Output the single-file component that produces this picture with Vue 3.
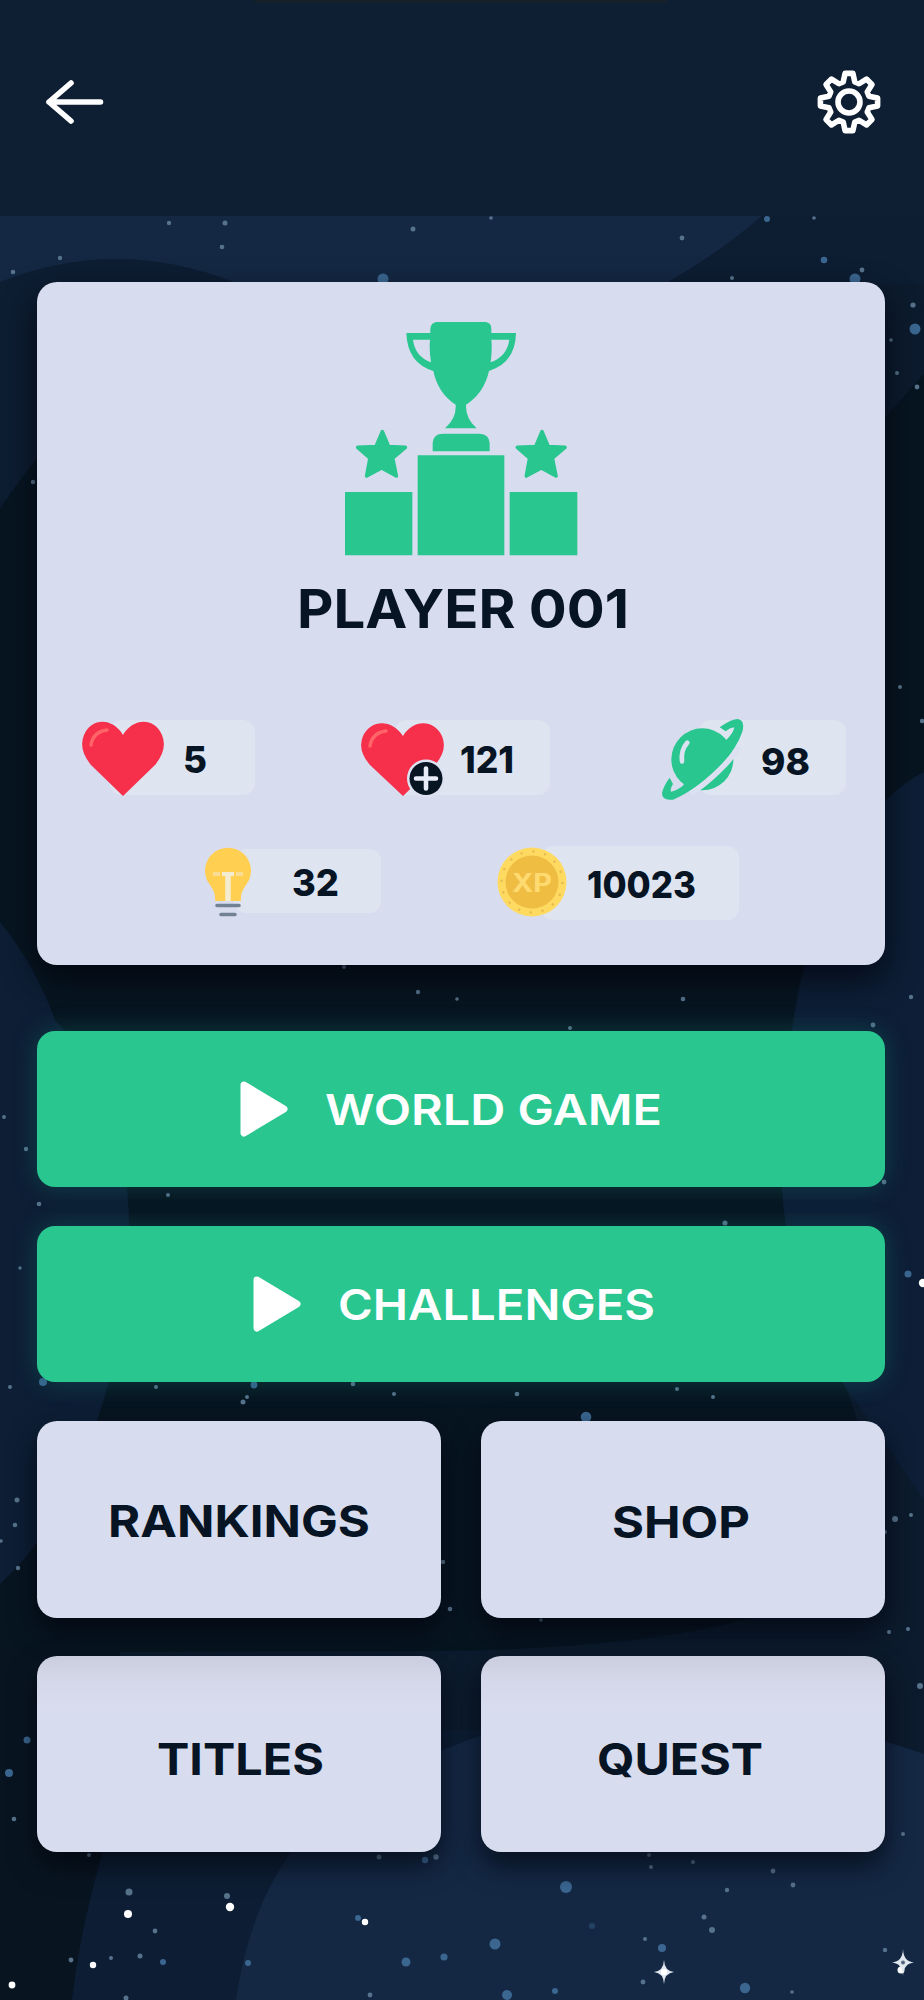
<script setup>
// [x, y, radius, tone]; tones: 0 faint, 1 blue, 2 white, 3 dim
const stars = [
  [169, 223, 2.2, 0], [225, 223, 2.5, 0], [222, 247, 2.3, 0], [413, 229, 2.5, 0], [491, 218, 1.8, 0],
  [682, 238, 2.4, 0], [767, 219, 3, 1], [814, 218, 1.8, 0], [824, 260, 3.3, 1], [862, 270, 2.4, 0],
  [855, 279, 5.5, 1], [383, 279, 5.5, 1], [732, 278, 2, 0], [60, 258, 2.2, 0], [13, 272, 2.3, 0],
  [913, 305, 2.6, 0], [915, 329, 5.5, 1], [891, 340, 1.8, 0], [897, 373, 2, 0], [917, 387, 2.4, 0],
  [33, 482, 2.2, 0], [900, 687, 2, 0], [922, 721, 2.2, 0], [344, 967, 2, 0], [418, 992, 2.2, 0],
  [457, 999, 1.8, 0], [683, 999, 2.3, 0], [911, 997, 2.2, 0], [570, 1028, 2, 0], [873, 1025, 2.4, 0],
  [4, 1117, 1.9, 0], [26, 1149, 2.2, 0], [168, 1195, 2, 0], [39, 1204, 2.3, 0], [884, 1182, 2.4, 0],
  [725, 1223, 2.6, 0], [20, 1268, 1.7, 0], [908, 1274, 3.5, 1], [923, 1283, 4.2, 2], [10, 1387, 2, 0],
  [43, 1382, 4, 1], [156, 1387, 2, 0], [254, 1385, 3.4, 1], [247, 1397, 2, 0], [243, 1402, 2.5, 0],
  [353, 1384, 2.3, 0], [394, 1394, 2, 0], [517, 1394, 2.3, 0], [677, 1389, 2, 0], [713, 1397, 2, 0],
  [586, 1417, 5.3, 1], [17, 1500, 2.5, 0], [15, 1525, 2.3, 0], [1, 1541, 1.8, 0], [18, 1568, 2.2, 0],
  [895, 1519, 3, 0], [911, 1515, 2, 0], [885, 1532, 2, 0], [443, 1562, 2.2, 0], [450, 1609, 2.3, 0],
  [541, 1620, 1.8, 0], [889, 1632, 2, 0], [908, 1629, 2, 0], [920, 1686, 3, 0], [27, 1740, 3.5, 1],
  [9, 1773, 4, 1], [14, 1819, 2.3, 0], [903, 1834, 2, 0], [89, 1855, 2, 0], [379, 1857, 2.5, 0],
  [436, 1857, 2.7, 0], [425, 1860, 3.2, 1], [649, 1855, 2, 0], [651, 1867, 2, 0], [693, 1862, 2, 0],
  [773, 1871, 2.4, 0], [793, 1885, 2.4, 0], [727, 1890, 2.2, 0], [566, 1887, 6, 1], [129, 1892, 3.5, 0],
  [128, 1914, 4, 2], [227, 1896, 3, 0], [230, 1907, 4.2, 2], [358, 1918, 3, 1], [365, 1922, 3.2, 2],
  [155, 1931, 2.4, 0], [592, 1926, 3, 3], [704, 1917, 2.5, 0], [712, 1930, 3, 0], [645, 1939, 2, 0],
  [495, 1944, 5.5, 1], [444, 1957, 3.6, 1], [406, 1962, 4.5, 1], [662, 1948, 4, 1], [140, 1956, 2.5, 0],
  [163, 1962, 3, 1], [71, 1960, 2.4, 0], [93, 1965, 3.2, 2], [111, 1958, 2, 0], [248, 1963, 3, 1],
  [12, 1985, 3.4, 2], [126, 1998, 2.5, 0], [370, 1995, 2.4, 0], [507, 1995, 5, 1], [555, 1991, 3, 1],
  [643, 1982, 2.4, 0], [745, 1988, 5.2, 1], [792, 1992, 1.8, 0], [885, 1950, 2.2, 0], [901, 1970, 3.5, 2],
]
const tone = ['#57738c', '#3a6690', '#ffffff', '#234264']

// Eight-tooth cog outline, one tooth repeated every 45 degrees
const tooth = [[-5.8, -20], [-3.9, -28.6], [3.9, -28.6], [5.8, -20]]
const cog = 'M' + Array.from({ length: 8 }, (_, i) => {
  const a = (i * Math.PI) / 4
  return tooth
    .map(([x, y]) => `${(x * Math.cos(a) - y * Math.sin(a)).toFixed(2)} ${(x * Math.sin(a) + y * Math.cos(a)).toFixed(2)}`)
    .join('L')
}).join('L') + 'Z'

const games = [
  { name: 'WORLD GAME', x: -1, width: 336, length: 337 },
  { name: 'CHALLENGES', x: -1, width: 317, length: 317 },
]
const tiles = [
  { name: 'RANKINGS', x: 1, y: 45, width: 262 },
  { name: 'SHOP', x: -2, y: 46, width: 138 },
  { name: 'TITLES', x: 2, y: 48, width: 167 },
  { name: 'QUEST', x: -3, y: 48, width: 166 },
]
</script>

<template>
  <main class="screen">
    <svg class="sky" width="924" height="2000" viewBox="0 0 924 2000" aria-hidden="true">
      <rect width="924" height="2000" fill="#0c1b2d" />
      <path d="M0 216H762Q724 250 665 284V420H0Z" fill="#142843" />
      <path d="M0 282Q115 236 234 282L924 284V216H762Q724 250 665 284H234V500H0Z" fill="#0d1d32" />
      <path d="M0 509Q20 478 60 430H875Q900 400 924 374V772Q850 820 810 940Q780 1050 782 1190Q790 1300 843 1383Q900 1500 790 1605Q680 1648 441 1651L0 1652Z" fill="#071521" />
      <path d="M0 922Q35 965 55 1020Q127 1100 127 1187Q138 1300 97 1421Q60 1530 0 1584Z" fill="#0d1e35" />
      <path d="M924 772Q850 810 812 940Q780 1050 782 1190Q790 1300 843 1383L924 1500Z" fill="#0d1e36" />
      <path d="M0 1645H120V1800Q84 1900 72 2000H0Z" fill="#081521" />
      <path d="M120 1800Q84 1900 72 2000H500L520 1730H140Z" fill="#0d1e34" />
      <path d="M236 2000Q265 1800 441 1751Q650 1660 924 1754V2000Z" fill="#142844" />
      <circle v-for="(s, i) in stars" :key="i" :cx="s[0]" :cy="s[1]" :r="s[2]" :fill="tone[s[3]]" />
      <g fill="#dfe7ef">
        <path d="M664 1960Q664.500 1971 674 1972Q664.500 1973 664 1984Q663.500 1973 654 1972Q663.500 1971 664 1960Z" />
        <circle cx="664" cy="1972" r="3.200" fill="#fff" />
        <path d="M903 1949Q903.500 1961.500 914 1962.500Q903.500 1963.500 903 1976Q902.500 1963.500 892 1962.500Q902.500 1961.500 903 1949Z" />
        <circle cx="903" cy="1962.500" r="2" fill="#52677c" />
      </g>
    </svg>

    <header class="bar">
      <span class="notch"></span>
      <svg width="62" height="50" viewBox="0 0 62 50" fill="none" stroke="#fff" stroke-width="5.600" stroke-linecap="round" stroke-linejoin="round">
        <path d="M56.500 25H5M27 6L5 25L27 44" />
      </svg>
      <svg width="70" height="70" viewBox="-35 -35 70 70" fill="none" stroke="#fff" stroke-width="5.600" stroke-linejoin="round">
        <path :d="cog" />
        <circle r="11" />
      </svg>
    </header>

    <section class="content">
      <article class="card">
        <svg class="trophy" width="233" height="234" viewBox="75 67 699 702" fill="#29c68f">
          <path d="M75 577H277V767H75ZM293 467H553V767H293ZM569 577H772V767H569Z" />
          <path d="M338 455V430Q340 402 369 402H479Q507 403 509 430V455Z" />
          <path d="M349 67H497Q514 69 514 87V100H588Q586 190 507 214Q492 281 438 315Q436 356 470 386H375Q410 356 407 315Q354 281 340 214Q262 190 259 100H331V87Q333 69 349 67ZM279 120Q285 170 333 188Q327 150 330 120ZM514 120Q517 150 512 188Q561 170 568 120Z" />
          <path v-for="x in [0, 479]" :key="x" :transform="`translate(${x} 0)`" stroke="#29c68f" stroke-width="11" stroke-linejoin="round" d="M187 396L206 441L256 443L218 475L229 529L185 505L140 529L150 475L113 443L168 441Z" />
        </svg>
        <svg class="player" width="332" height="54" viewBox="0 0 332 54">
          <text x="-1" y="46" textLength="332" lengthAdjust="spacingAndGlyphs">PLAYER 001</text>
        </svg>

        <div class="stats first">
          <div class="stat lives">
            <svg class="icon" width="82" height="76" viewBox="0 0 82 76">
              <path d="M41 75L9 44Q-4 28 2 14C10-4 31-3 41 14C51-3 72-4 80 14Q86 28 73 44Z" fill="#f62f4b" />
              <path d="M9 24Q11 11 25 9" fill="none" stroke="#ff6468" stroke-width="3.500" stroke-linecap="round" />
            </svg>
            <div class="pill"><svg width="24" height="30"><text x="-1" y="28" textLength="24" lengthAdjust="spacingAndGlyphs">5</text></svg></div>
          </div>
          <div class="stat extra">
            <svg class="icon" width="86" height="76" viewBox="0 0 86 76">
              <path d="M42 74L9 43Q-4 28 2 14C10-3 31-3 42 14C52-3 73-3 81 14Q87 28 74 43Z" fill="#f62f4b" />
              <path d="M9 24Q11 11 25 9" fill="none" stroke="#ff6468" stroke-width="3.500" stroke-linecap="round" />
              <circle cx="65" cy="56.500" r="19" fill="#dde2f0" /><circle cx="65" cy="56.500" r="16.500" fill="#071421" />
              <path d="M65 46.500V66.500M55 56.500H75" stroke="#e8ecf6" stroke-width="4.600" stroke-linecap="round" />
            </svg>
            <div class="pill"><svg width="54" height="30"><text x="-1" y="28" textLength="54" lengthAdjust="spacingAndGlyphs">121</text></svg></div>
          </div>
          <div class="stat worlds">
            <svg class="icon" width="82" height="82" viewBox="547 57 246 246">
              <circle cx="668" cy="178" r="93" fill="#29c68f" />
              <path d="M778 140Q758 172 717 212Q672 256 632 280" fill="none" stroke="#dbe1f0" stroke-width="18" />
              <path d="M720 82Q755 57 775 57Q797 62 788 95Q770 150 710 208Q640 275 580 299Q547 303 547 280Q550 260 570 233L580 252Q570 268 574 275Q590 272 610 257L650 180L742 118Q765 92 763 82Q750 84 738 94Z" fill="#29c68f" />
              <path d="M607 184Q603 150 623 128" fill="none" stroke="#dce2f1" stroke-width="14" stroke-linecap="round" />
            </svg>
            <div class="pill"><svg width="50" height="30"><text x="0" y="28" textLength="49" lengthAdjust="spacingAndGlyphs">98</text></svg></div>
          </div>
        </div>
        <div class="stats second">
          <div class="stat hints">
            <svg class="icon" width="46" height="70" viewBox="0 0 46 70">
              <path d="M10 52Q11 44 5 36A23 23 0 1 1 41 36Q35 44 36 52Z" fill="#ffcf52" />
              <path d="M8 25H15M31 25H38" stroke="#f7df9a" stroke-width="3.500" /><path d="M17 25H29" stroke="#f4ecd1" stroke-width="4" /><path d="M23 25V52" stroke="#f4ecd1" stroke-width="5.500" />
              <path d="M12 56.500H34M16 65.500H30" stroke="#718295" stroke-width="3.600" stroke-linecap="round" />
            </svg>
            <div class="pill"><svg width="48" height="30"><text x="0" y="28" textLength="47" lengthAdjust="spacingAndGlyphs">32</text></svg></div>
          </div>
          <div class="stat xp">
            <svg class="icon" width="70" height="70" viewBox="-35 -35 70 70">
              <circle r="34.500" fill="#ffda61" /><circle r="30.500" fill="none" stroke="#e6b94e" stroke-width="2.200" stroke-dasharray="2.200 9.780" />
              <circle r="26.500" fill="#f0bd43" />
              <text class="coin" x="-20" y="10" textLength="40" lengthAdjust="spacingAndGlyphs">XP</text>
            </svg>
            <div class="pill"><svg width="110" height="30"><text x="-1" y="28" textLength="109" lengthAdjust="spacingAndGlyphs">10023</text></svg></div>
          </div>
        </div>
      </article>

      <button v-for="g in games" :key="g.name" class="game">
        <svg class="play" width="49" height="58" viewBox="0 0 49 58"><path d="M4 5L44 29L4 53Z" fill="#fff" stroke="#fff" stroke-width="7" stroke-linejoin="round" /></svg>
        <svg :width="g.width" height="44"><text :x="g.x" y="38" :textLength="g.length" lengthAdjust="spacingAndGlyphs">{{ g.name }}</text></svg>
      </button>

      <nav class="tiles">
        <button v-for="t in tiles" :key="t.name" class="tile">
          <svg :width="t.width" height="44"><text :x="t.x" :y="t.y" :textLength="t.width" lengthAdjust="spacingAndGlyphs">{{ t.name }}</text></svg>
        </button>
      </nav>
    </section>
  </main>
</template>

<style>
body { background: #0c1b2d; }
</style>

<style scoped>
.screen { position: relative; width: 924px; height: 2000px; overflow: hidden; font-family: Inter, "Liberation Sans", sans-serif; }
.screen svg { display: block; flex: none; overflow: visible; }
.screen .sky { position: absolute; inset: 0; overflow: hidden; }
.bar { position: relative; box-sizing: border-box; height: 216px; padding: 0 40px 12px 44px; display: flex; align-items: center; justify-content: space-between; background: #0e1e33; }
.notch { position: absolute; top: 0; left: 254px; width: 414px; height: 3px; background: #16202a; border-radius: 0 0 12px 12px; }
.content { position: relative; padding: 66px 39px 0 37px; }
.card { box-sizing: border-box; height: 683px; padding-top: 40px; border-radius: 20px; background: #d8dcef; box-shadow: 0 14px 32px rgba(0, 2, 9, .68); }
.trophy { margin-left: 307.500px; }
.player { margin: 26px 0 0 261px; font-size: 53.500px; font-weight: 700; fill: #071424; }
.stats { display: flex; align-items: flex-start; font-size: 37.500px; font-weight: 800; fill: #071424; }
.first { margin: 82px 38px 0 45px; height: 84px; }
.second { margin: 44px 0 0 168px; height: 75px; }
.stat { display: flex; align-items: flex-start; }
.icon { position: relative; z-index: 1; }
.pill { box-sizing: border-box; height: 75px; display: flex; align-items: flex-start; border-radius: 12px; background: #dfe4f1; }
.lives .icon { margin-top: 3px; }
.lives .pill, .extra .pill { margin-top: 2px; padding-top: 25px; }
.lives .pill { width: 145px; margin-left: -54px; padding-left: 74px; }
.extra { margin-left: 106px; }
.extra .icon { margin-top: 4px; }
.extra .pill { width: 155px; margin-left: -52px; padding-left: 66px; }
.worlds { margin-left: 112px; }
.worlds .icon { margin-top: 1px; }
.worlds .pill { width: 147px; margin: 2px 0 0 -45px; padding: 27px 0 0 62px; }
.hints .icon { margin-top: 3px; }
.hints .pill { width: 147px; height: 64px; margin: 3px 0 0 -17px; padding: 19px 0 0 58px; }
.xp { margin-left: 116px; }
.xp .icon { margin-top: 1px; }
.xp .pill { width: 198px; height: 74px; margin: 0 0 0 -26px; padding: 24px 0 0 47px; }
.coin { font-size: 25px; font-weight: 700; fill: #ffda70; }
button { border: 0; padding: 0; font-family: inherit; box-sizing: border-box; }
.game { width: 848px; height: 156px; margin-top: 66px; padding-right: 20px; display: flex; align-items: center; justify-content: center; gap: 37px; border-radius: 18px; background: #29c68f; box-shadow: 0 0 24px rgba(20, 120, 110, .4); font-size: 42.500px; font-weight: 600; fill: #fff; }
.game + .game { margin-top: 39px; padding-right: 14px; }
.tiles { margin-top: 39px; display: grid; grid-template-columns: 404px 404px; gap: 38px 40px; }
.tile { height: 196.500px; display: flex; align-items: center; justify-content: center; padding-bottom: 10px; border-radius: 20px; background: #d8dcef; box-shadow: 0 13px 28px rgba(0, 3, 10, .65); font-size: 44.500px; font-weight: 700; fill: #071424; }
.tile:nth-child(odd) { padding-right: 2px; }
.tile:nth-child(n + 3) { background: linear-gradient(#c9cddd, #d3d7e8 22px, #d8dcef 54px); }
</style>
